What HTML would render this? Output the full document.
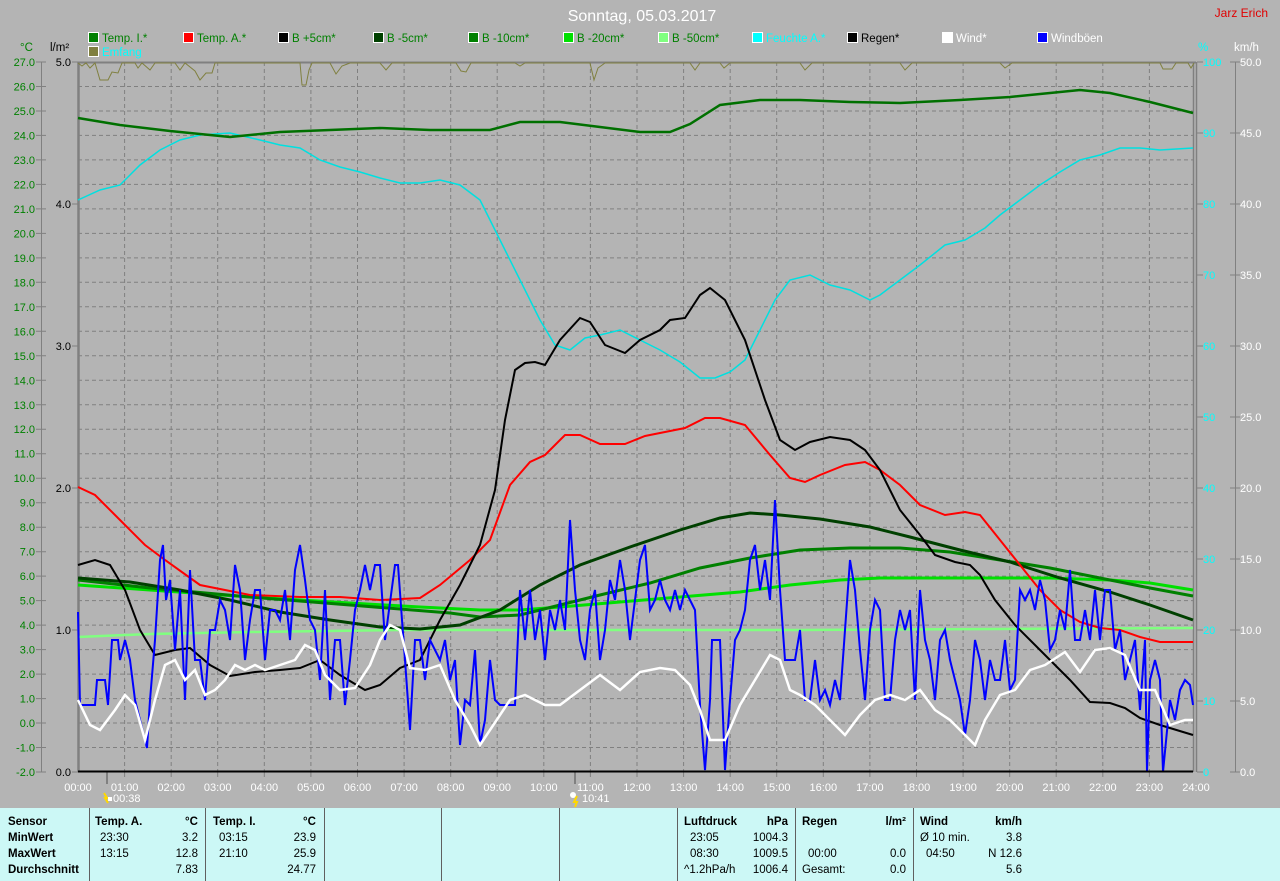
<!DOCTYPE html>
<html><head><meta charset="utf-8"><style>
html,body{margin:0;padding:0;background:#b4b4b4;}
svg{display:block;font-family:"Liberation Sans",sans-serif;}
.tb{position:absolute;left:0;top:808px;width:1280px;height:73px;background:#ccf8f6;font-family:"Liberation Sans",sans-serif;font-size:11.5px;color:#000;}
.tb div{position:absolute;white-space:nowrap;}
.b{font-weight:bold;}
.sep{position:absolute;top:0;width:1px;height:73px;background:#606060;}
</style></head><body>
<svg width="1280" height="808" viewBox="0 0 1280 808">
<rect width="1280" height="808" fill="#b4b4b4"/>
<text x="642" y="21" fill="#fff" font-size="16" text-anchor="middle">Sonntag, 05.03.2017</text>
<text x="1268" y="17" fill="#e00000" font-size="12" text-anchor="end">Jarz Erich</text>
<g font-size="11.5">
<rect x="88.5" y="32.5" width="10" height="10" fill="#008000" stroke="#fff"/><text x="102" y="42" fill="#008000">Temp. I.*</text>
<rect x="183.5" y="32.5" width="10" height="10" fill="#ff0000" stroke="#fff"/><text x="197" y="42" fill="#008000">Temp. A.*</text>
<rect x="278.5" y="32.5" width="10" height="10" fill="#000" stroke="#fff"/><text x="292" y="42" fill="#008000">B +5cm*</text>
<rect x="373.5" y="32.5" width="10" height="10" fill="#004000" stroke="#fff"/><text x="387" y="42" fill="#008000">B -5cm*</text>
<rect x="468.5" y="32.5" width="10" height="10" fill="#008000" stroke="#fff"/><text x="482" y="42" fill="#008000">B -10cm*</text>
<rect x="563.5" y="32.5" width="10" height="10" fill="#00e000" stroke="#fff"/><text x="577" y="42" fill="#008000">B -20cm*</text>
<rect x="658.5" y="32.5" width="10" height="10" fill="#80ff80" stroke="#fff"/><text x="672" y="42" fill="#008000">B -50cm*</text>
<rect x="752.5" y="32.5" width="10" height="10" fill="#00ffff" stroke="#fff"/><text x="766" y="42" fill="#00ffff">Feuchte A.*</text>
<rect x="847.5" y="32.5" width="10" height="10" fill="#000" stroke="#fff"/><text x="861" y="42" fill="#000">Regen*</text>
<rect x="942.5" y="32.5" width="10" height="10" fill="#fff" stroke="#fff"/><text x="956" y="42" fill="#fff">Wind*</text>
<rect x="1037.5" y="32.5" width="10" height="10" fill="#0000ff" stroke="#fff"/><text x="1051" y="42" fill="#fff">Windböen</text>
<rect x="88.5" y="46.5" width="10" height="10" fill="#808040" stroke="#fff"/><text x="102" y="56" fill="#00ffff">Emfang</text>
<text x="20" y="51" fill="#008000">°C</text>
<text x="50" y="51" fill="#000">l/m²</text>
<text x="1198" y="51" fill="#00ffff">%</text>
<text x="1234" y="51" fill="#fff">km/h</text>
</g>
<!-- grid -->
<g stroke="#808080" stroke-width="1" stroke-dasharray="4,3">
<path d="M124.6 62V772M171.2 62V772M217.7 62V772M264.3 62V772M310.9 62V772M357.5 62V772M404.1 62V772M450.7 62V772M497.2 62V772M543.8 62V772M590.4 62V772M637 62V772M683.6 62V772M730.2 62V772M776.7 62V772M823.3 62V772M869.9 62V772M916.5 62V772M963.1 62V772M1009.7 62V772M1056.2 62V772M1102.8 62V772M1149.4 62V772"/>
<path d="M78 86.5H1193M78 111H1193M78 135.4H1193M78 159.9H1193M78 184.4H1193M78 208.9H1193M78 233.4H1193M78 257.9H1193M78 282.3H1193M78 306.8H1193M78 331.3H1193M78 355.8H1193M78 380.3H1193M78 404.8H1193M78 429.2H1193M78 453.7H1193M78 478.2H1193M78 502.7H1193M78 527.2H1193M78 551.7H1193M78 576.1H1193M78 600.6H1193M78 625.1H1193M78 649.6H1193M78 674.1H1193M78 698.6H1193M78 723H1193M78 747.5H1193"/>
</g>
<!-- axes -->
<g stroke="#808080" fill="none">
<path d="M78 62V772M79 62V772" stroke-width="1.5"/>
<path d="M78 62.5H1196" stroke-width="2"/>
<path d="M1193.5 62V772M1196.5 62V772" stroke-width="1.5"/>
<path d="M41.5 62V772M1235.5 62V772"/>
<path d="M36 62H46M36 86.5H46M36 111H46M36 135.4H46M36 159.9H46M36 184.4H46M36 208.9H46M36 233.4H46M36 257.9H46M36 282.3H46M36 306.8H46M36 331.3H46M36 355.8H46M36 380.3H46M36 404.8H46M36 429.2H46M36 453.7H46M36 478.2H46M36 502.7H46M36 527.2H46M36 551.7H46M36 576.1H46M36 600.6H46M36 625.1H46M36 649.6H46M36 674.1H46M36 698.6H46M36 723H46M36 747.5H46M36 772H46"/>
<path d="M72 62H78M72 204H78M72 346H78M72 488H78M72 630H78M72 772H78"/>
<path d="M1197 62H1203M1197 133H1203M1197 204H1203M1197 275H1203M1197 346H1203M1197 417H1203M1197 488H1203M1197 559H1203M1197 630H1203M1197 701H1203M1197 772H1203"/>
<path d="M1230 62H1240M1230 133H1240M1230 204H1240M1230 275H1240M1230 346H1240M1230 417H1240M1230 488H1240M1230 559H1240M1230 630H1240M1230 701H1240M1230 772H1240"/>
<path d="M124.6 772V777M171.2 772V777M217.7 772V777M264.3 772V777M310.9 772V777M357.5 772V777M404.1 772V777M450.7 772V777M497.2 772V777M543.8 772V777M590.4 772V777M637 772V777M683.6 772V777M730.2 772V777M776.7 772V777M823.3 772V777M869.9 772V777M916.5 772V777M963.1 772V777M1009.7 772V777M1056.2 772V777M1102.8 772V777M1149.4 772V777"/>
<path d="M107 772V784M575 772V784" stroke-width="2"/>
</g>
<g font-size="11" fill="#008000" text-anchor="end">
<text x="35" y="66">27.0</text><text x="35" y="90.5">26.0</text><text x="35" y="115">25.0</text><text x="35" y="139.4">24.0</text><text x="35" y="163.9">23.0</text><text x="35" y="188.4">22.0</text><text x="35" y="212.9">21.0</text><text x="35" y="237.4">20.0</text><text x="35" y="261.9">19.0</text><text x="35" y="286.3">18.0</text><text x="35" y="310.8">17.0</text><text x="35" y="335.3">16.0</text><text x="35" y="359.8">15.0</text><text x="35" y="384.3">14.0</text><text x="35" y="408.8">13.0</text><text x="35" y="433.2">12.0</text><text x="35" y="457.7">11.0</text><text x="35" y="482.2">10.0</text><text x="35" y="506.7">9.0</text><text x="35" y="531.2">8.0</text><text x="35" y="555.7">7.0</text><text x="35" y="580.1">6.0</text><text x="35" y="604.6">5.0</text><text x="35" y="629.1">4.0</text><text x="35" y="653.6">3.0</text><text x="35" y="678.1">2.0</text><text x="35" y="702.6">1.0</text><text x="35" y="727">0.0</text><text x="35" y="751.5">-1.0</text><text x="35" y="776">-2.0</text>
</g>
<g font-size="11" fill="#000" text-anchor="end">
<text x="71" y="66">5.0</text><text x="71" y="208">4.0</text><text x="71" y="350">3.0</text><text x="71" y="492">2.0</text><text x="71" y="634">1.0</text><text x="71" y="776">0.0</text>
</g>
<g font-size="11" fill="#00ffff">
<text x="1203" y="66">100</text><text x="1203" y="137">90</text><text x="1203" y="208">80</text><text x="1203" y="279">70</text><text x="1203" y="350">60</text><text x="1203" y="421">50</text><text x="1203" y="492">40</text><text x="1203" y="563">30</text><text x="1203" y="634">20</text><text x="1203" y="705">10</text><text x="1203" y="776">0</text>
</g>
<g font-size="11" fill="#fff">
<text x="1240" y="66">50.0</text><text x="1240" y="137">45.0</text><text x="1240" y="208">40.0</text><text x="1240" y="279">35.0</text><text x="1240" y="350">30.0</text><text x="1240" y="421">25.0</text><text x="1240" y="492">20.0</text><text x="1240" y="563">15.0</text><text x="1240" y="634">10.0</text><text x="1240" y="705">5.0</text><text x="1240" y="776">0.0</text>
</g>
<g font-size="11" fill="#fff" text-anchor="middle">
<text x="78" y="791">00:00</text><text x="124.6" y="791">01:00</text><text x="171.2" y="791">02:00</text><text x="217.7" y="791">03:00</text><text x="264.3" y="791">04:00</text><text x="310.9" y="791">05:00</text><text x="357.5" y="791">06:00</text><text x="404.1" y="791">07:00</text><text x="450.7" y="791">08:00</text><text x="497.2" y="791">09:00</text><text x="543.8" y="791">10:00</text><text x="590.4" y="791">11:00</text><text x="637" y="791">12:00</text><text x="683.6" y="791">13:00</text><text x="730.2" y="791">14:00</text><text x="776.7" y="791">15:00</text><text x="823.3" y="791">16:00</text><text x="869.9" y="791">17:00</text><text x="916.5" y="791">18:00</text><text x="963.1" y="791">19:00</text><text x="1009.7" y="791">20:00</text><text x="1056.2" y="791">21:00</text><text x="1102.8" y="791">22:00</text><text x="1149.4" y="791">23:00</text><text x="1196" y="791">24:00</text>
</g>
<g font-size="11" fill="#fff">
<text x="113" y="802">00:38</text><text x="582" y="802">10:41</text>
</g>
<path d="M104 793l3 5-2 0 3 5" stroke="#ffd800" stroke-width="2" fill="none"/><rect x="108" y="797" width="4" height="4" fill="#fff"/>
<circle cx="573" cy="795" r="3" fill="#fff"/><path d="M577 796l-3 6 3 0-2 5" stroke="#ffd800" stroke-width="2" fill="none"/>
<!-- Emfang -->
<polyline fill="none" stroke="#808040" stroke-width="1" points="78,63 82,66 86,63 90,68 95,63 100,80 108,80 112,72 118,73 122,63 135,63 138,68 142,63 150,70 155,63 175,63 180,70 185,63 195,71 200,80 206,73 212,73 215,63 300,63 302,85 306,85 309,70 312,63 330,63 336,74 342,66 350,63 380,63 386,70 392,63 456,63 461,71 466,72 471,63 515,63 520,66 525,63 590,63 594,80 598,68 605,63 690,63 695,70 700,63 720,63 724,68 730,63 800,63 805,70 812,63 900,63 905,70 912,63 1000,63 1005,68 1012,63 1160,63 1163,69 1172,69 1176,63 1188,63 1191,68 1194,63"/>
<!-- Humidity -->
<polyline fill="none" stroke="#00e0e0" stroke-width="1.5" points="78,200 100,190 120,185 140,165 160,150 180,140 200,135 230,133 260,140 280,145 300,148 320,160 340,167 360,172 380,178 400,183 420,183 440,180 460,185 480,200 500,240 520,280 540,320 555,345 570,350 585,338 600,335 620,330 640,340 660,350 680,362 700,378 715,378 730,372 745,360 760,330 775,300 790,280 810,275 830,285 850,290 870,300 880,295 900,280 920,265 945,245 965,240 985,228 1000,215 1020,200 1040,185 1060,172 1080,160 1100,155 1120,148 1140,148 1160,150 1193,148"/>
<!-- Temp I -->
<polyline fill="none" stroke="#007000" stroke-width="2.5" points="78,118 120,125 170,131 230,137 280,132 330,130 380,128 430,130 490,130 520,122 560,122 600,127 640,132 670,132 690,124 720,105 760,100 800,100 850,102 900,103 960,100 1010,97 1050,93 1080,90 1110,93 1150,102 1193,113"/>
<!-- B-50 -->
<polyline fill="none" stroke="#80ff80" stroke-width="2.5" points="78,637 150,634 250,632 400,630 600,630 800,630 1000,629 1193,628"/>
<!-- B-20 -->
<polyline fill="none" stroke="#00e000" stroke-width="3" points="78,585 150,590 250,597 350,603 420,607 480,610 520,610 560,607 620,602 680,597 740,592 790,585 840,580 880,578 950,578 1050,578 1110,580 1150,583 1193,590"/>
<!-- B-10 -->
<polyline fill="none" stroke="#008000" stroke-width="3" points="78,580 150,588 250,597 350,605 450,613 480,617 520,615 560,605 600,595 650,583 700,568 750,558 800,550 850,548 900,548 950,552 1000,560 1050,568 1100,578 1150,588 1193,596"/>
<!-- B-5 -->
<polyline fill="none" stroke="#004000" stroke-width="3" points="78,578 130,582 180,590 230,600 280,612 330,620 380,627 420,629 460,625 500,610 540,585 580,565 630,547 680,530 720,518 750,513 780,515 820,519 870,527 910,537 960,550 1010,562 1060,578 1110,592 1150,605 1193,620"/>
<!-- Temp A -->
<polyline fill="none" stroke="#ff0000" stroke-width="2" points="78,487 95,495 120,520 145,545 165,560 200,585 250,595 300,597 340,597 380,600 420,598 440,585 470,560 490,540 510,485 530,462 545,455 565,435 580,435 600,444 625,444 645,436 665,432 685,428 705,418 720,418 745,425 770,455 790,478 805,482 820,475 845,465 865,462 880,470 900,485 920,505 945,515 965,512 980,515 1000,540 1020,565 1040,590 1060,610 1080,622 1100,628 1120,630 1140,637 1160,642 1193,642"/>
<!-- B+5 -->
<polyline fill="none" stroke="#000" stroke-width="2" points="78,565 95,560 110,565 125,590 140,630 155,655 175,650 190,648 210,665 230,676 255,672 280,670 300,668 320,660 340,675 365,690 380,685 400,668 420,660 440,620 460,585 480,545 495,490 505,420 515,370 525,363 535,362 545,365 560,340 580,318 590,322 605,345 625,353 640,340 660,330 670,320 685,318 700,295 710,288 725,300 745,340 765,400 780,440 795,450 810,442 830,437 850,440 865,450 880,470 900,510 920,535 935,555 955,562 970,565 980,575 995,600 1015,625 1040,650 1070,680 1090,702 1110,703 1125,708 1140,718 1160,725 1193,735"/>
<!-- Windböen -->
<polyline fill="none" stroke="#0000ff" stroke-width="2" points="78,612 80,705 95,705 97,680 105,680 108,705 112,640 118,640 120,660 125,640 130,660 135,700 140,720 147,748 150,700 155,640 160,560 163,545 166,600 170,580 175,650 180,590 185,700 190,570 195,660 200,660 205,700 210,630 215,630 220,600 225,610 230,640 235,565 240,590 245,660 250,620 255,590 260,590 265,660 270,610 275,610 280,620 285,590 290,640 295,570 300,545 305,580 310,620 315,630 320,680 325,590 330,700 335,640 340,640 345,705 350,660 355,610 360,590 365,565 370,590 375,565 380,565 385,640 395,565 398,565 402,620 405,660 410,730 415,640 420,640 425,680 430,640 440,660 445,640 450,680 455,660 460,745 465,700 470,705 475,650 480,745 485,720 490,660 495,700 500,705 515,705 520,590 525,640 530,590 535,640 540,610 545,660 550,610 555,630 560,600 565,630 570,520 575,590 580,640 585,660 590,610 595,590 600,660 605,630 610,580 615,600 620,560 625,590 630,640 635,600 640,560 645,545 650,610 655,600 660,580 665,600 670,610 675,590 680,610 685,590 690,600 695,610 700,705 705,770 710,700 712,640 720,640 725,770 730,700 735,640 740,630 745,610 750,560 755,545 760,590 765,560 770,600 775,500 780,590 785,660 790,660 795,660 800,630 805,700 810,700 815,660 820,700 825,690 830,705 835,680 840,700 845,630 850,560 855,590 860,650 865,700 870,630 875,600 880,610 885,700 890,700 895,640 900,610 905,630 910,610 915,700 920,590 925,640 930,660 935,700 940,640 945,630 950,660 955,680 960,700 965,735 970,700 975,640 980,660 985,700 990,660 995,680 1000,680 1005,640 1010,690 1015,680 1020,590 1025,600 1030,590 1035,610 1040,580 1045,600 1050,650 1055,640 1060,610 1065,630 1070,570 1075,640 1080,640 1085,610 1090,640 1095,590 1100,640 1105,590 1110,590 1115,650 1120,630 1125,680 1130,660 1135,640 1140,710 1145,640 1147,772 1150,680 1155,660 1160,680 1163,772 1170,700 1175,720 1180,690 1185,680 1190,685 1193,705"/>
<!-- Wind -->
<polyline fill="none" stroke="#fff" stroke-width="2.5" points="78,700 90,725 100,730 115,710 125,695 135,705 145,740 155,700 165,665 175,660 185,680 195,670 205,695 215,690 225,680 235,665 245,670 255,665 265,670 280,665 295,660 305,645 315,650 325,675 340,690 355,688 370,665 380,640 390,625 400,630 410,668 425,670 440,665 455,700 470,725 480,745 490,730 510,700 525,695 545,705 560,705 580,690 600,675 620,690 640,672 660,668 675,670 690,685 700,710 710,740 725,740 740,705 755,680 770,655 780,660 790,690 800,695 815,705 830,720 845,735 860,715 875,700 890,695 905,700 920,690 935,710 950,720 965,735 975,745 985,720 1000,695 1015,690 1030,670 1045,665 1065,652 1080,672 1095,650 1110,648 1125,655 1140,690 1155,690 1170,725 1185,720 1193,720"/>
<!-- Rain -->
<path d="M78 771.5H1193" stroke="#000" stroke-width="2"/>
</svg>
<div class="tb">
<div class="sep" style="left:89px"></div><div class="sep" style="left:205px"></div><div class="sep" style="left:324px"></div><div class="sep" style="left:441px"></div><div class="sep" style="left:559px"></div><div class="sep" style="left:677px"></div><div class="sep" style="left:795px"></div><div class="sep" style="left:913px"></div>
<div class="b" style="left:8px;top:8px">Sensor</div>
<div class="b" style="left:8px;top:24px">MinWert</div>
<div class="b" style="left:8px;top:40px">MaxWert</div>
<div class="b" style="left:8px;top:56px">Durchschnitt</div>
<div class="b" style="left:95px;top:8px">Temp. A.</div><div class="b" style="left:185px;top:8px">°C</div>
<div style="left:100px;top:24px">23:30</div><div style="right:1082px;top:24px">3.2</div>
<div style="left:100px;top:40px">13:15</div><div style="right:1082px;top:40px">12.8</div>
<div style="right:1082px;top:56px">7.83</div>
<div class="b" style="left:213px;top:8px">Temp. I.</div><div class="b" style="left:303px;top:8px">°C</div>
<div style="left:219px;top:24px">03:15</div><div style="right:964px;top:24px">23.9</div>
<div style="left:219px;top:40px">21:10</div><div style="right:964px;top:40px">25.9</div>
<div style="right:964px;top:56px">24.77</div>
<div class="b" style="left:684px;top:8px">Luftdruck</div><div class="b" style="right:492px;top:8px">hPa</div>
<div style="left:690px;top:24px">23:05</div><div style="right:492px;top:24px">1004.3</div>
<div style="left:690px;top:40px">08:30</div><div style="right:492px;top:40px">1009.5</div>
<div style="left:684px;top:56px">^1.2hPa/h</div><div style="right:492px;top:56px">1006.4</div>
<div class="b" style="left:802px;top:8px">Regen</div><div class="b" style="right:374px;top:8px">l/m²</div>
<div style="left:808px;top:40px">00:00</div><div style="right:374px;top:40px">0.0</div>
<div style="left:802px;top:56px">Gesamt:</div><div style="right:374px;top:56px">0.0</div>
<div class="b" style="left:920px;top:8px">Wind</div><div class="b" style="right:258px;top:8px">km/h</div>
<div style="left:920px;top:24px">Ø 10 min.</div><div style="right:258px;top:24px">3.8</div>
<div style="left:926px;top:40px">04:50</div><div style="right:258px;top:40px">N 12.6</div>
<div style="right:258px;top:56px">5.6</div>
</div>
</body></html>
